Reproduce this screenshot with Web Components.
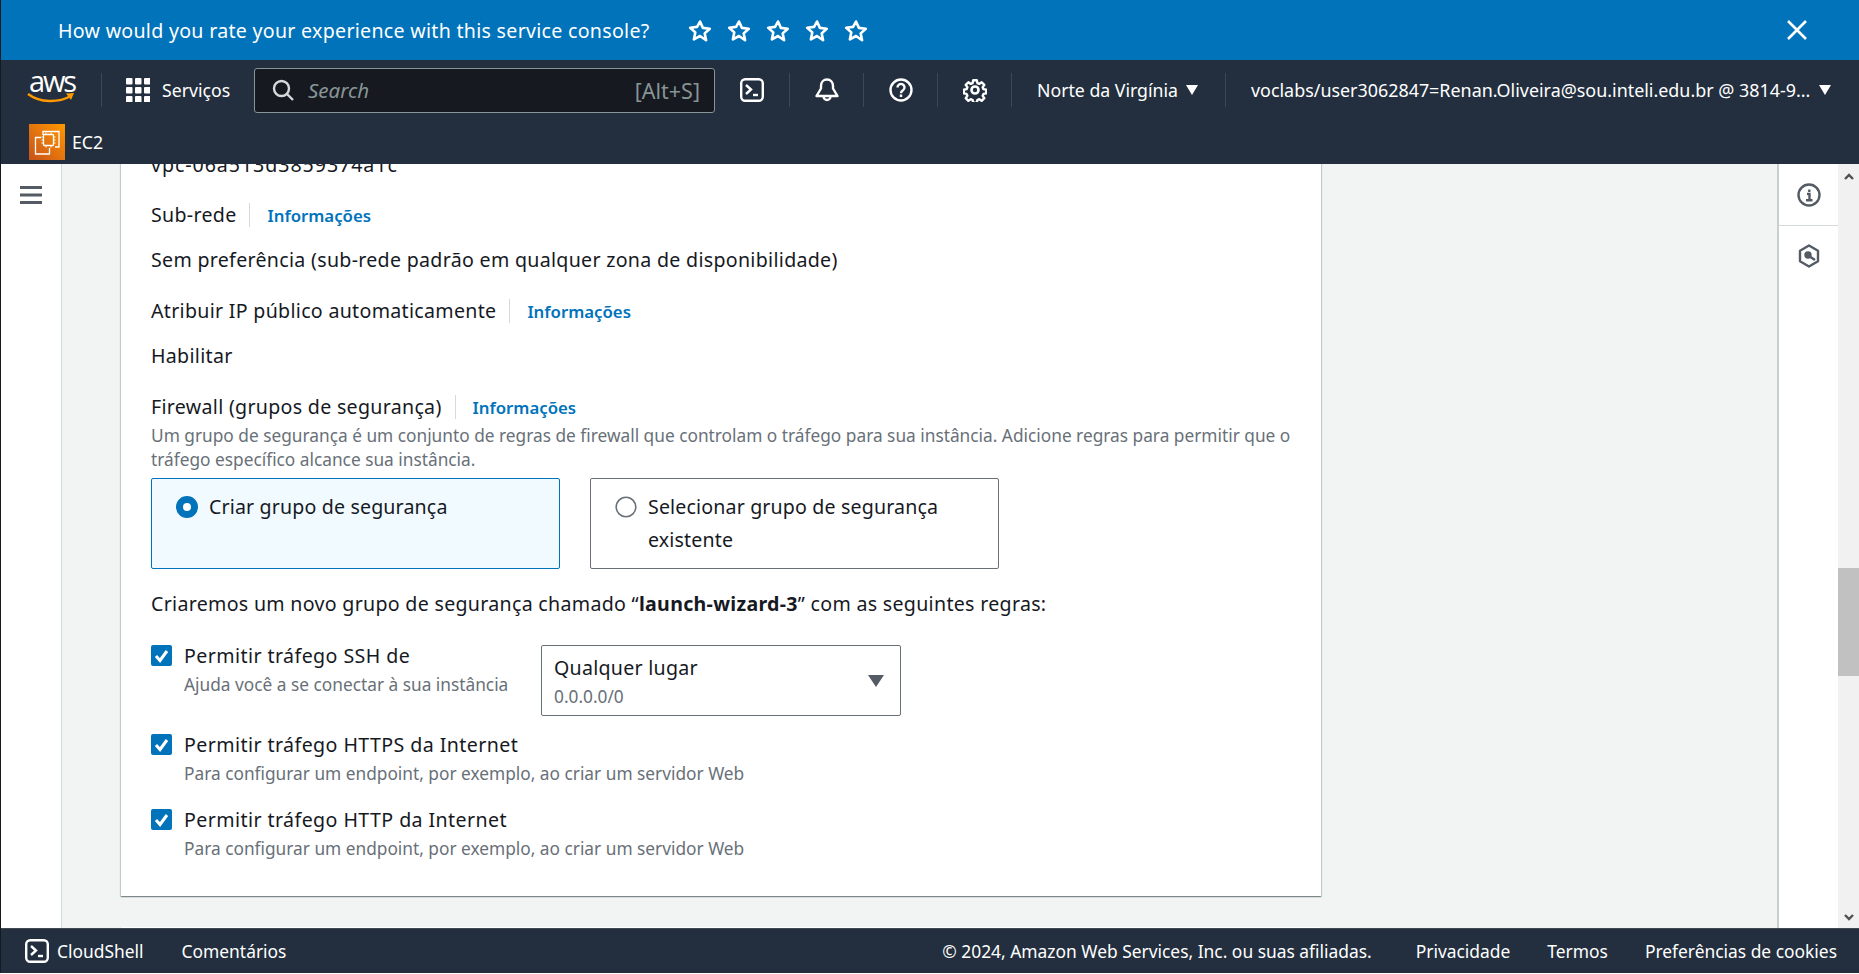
<!DOCTYPE html>
<html lang="pt-BR">
<head>
<meta charset="utf-8">
<title>EC2 - Executar instância</title>
<style>
  html, body { margin: 0; height: 100%; background: #fff; overflow: hidden; }
  body { font-family: "Noto Sans", "Open Sans", sans-serif; color: #16191f; }
  .vpc { letter-spacing: .95px; }
</style>
</head>
<body>
<aws-console>
  <survey-banner slot="banner">How would you rate your experience with this service console?</survey-banner>
  <top-nav slot="nav"></top-nav>
  <side-rail slot="rail"></side-rail>
  <div slot="main">
    <launch-card>
      <plain-row class="vpc" gap="26">vpc-06a513d3859374a1c</plain-row>
      <field-label gap="21">Sub-rede</field-label>
      <plain-row gap="27">Sem preferência (sub-rede padrão em qualquer zona de disponibilidade)</plain-row>
      <field-label gap="21">Atribuir IP público automaticamente</field-label>
      <plain-row gap="27">Habilitar</plain-row>
      <field-label>Firewall (grupos de segurança)</field-label>
      <help-text>Um grupo de segurança é um conjunto de regras de firewall que controlam o tráfego para sua instância. Adicione regras para permitir que o tráfego específico alcance sua instância.</help-text>
      <radio-pair>
        <radio-card selected>Criar grupo de segurança</radio-card>
        <radio-card>Selecionar grupo de segurança existente</radio-card>
      </radio-pair>
      <plain-row gap="23">Criaremos um novo grupo de segurança chamado “<b>launch-wizard-3</b>” com as seguintes regras:</plain-row>
      <check-row gap="29" hint="Ajuda você a se conectar à sua instância">Permitir tráfego SSH de
        <select-box slot="extra" value="Qualquer lugar" sub="0.0.0.0/0"></select-box>
      </check-row>
      <check-row gap="18" hint="Para configurar um endpoint, por exemplo, ao criar um servidor Web">Permitir tráfego HTTPS da Internet</check-row>
      <check-row gap="23" hint="Para configurar um endpoint, por exemplo, ao criar um servidor Web">Permitir tráfego HTTP da Internet</check-row>
    </launch-card>
    <launch-card empty></launch-card>
  </div>
  <tools-panel slot="tools"></tools-panel>
  <fake-scrollbar slot="scroll"></fake-scrollbar>
  <page-footer slot="footer"></page-footer>
</aws-console>

<script>
const TERMINAL = `<svg width="24" height="24" viewBox="0 0 24 24" fill="none" stroke="#fff" stroke-width="2.400"><rect x="1.200" y="1.200" width="21.600" height="21.600" rx="4"/><path d="M6 7l5 4.500-5 4.500"/><path d="M13 17h5"/></svg>`;

class aws_console extends HTMLElement {
  constructor() {
    super();
    this.attachShadow({ mode: "open" }).innerHTML = `
    <style>
      :host { display: grid; height: 973px; width: 1858px; margin-left: 1px; box-shadow: -1px 0 0 #16191f;
        grid-template-columns: 61px 1fr 61px 21px; grid-template-rows: 60px 104px 1fr 45px; overflow: hidden; }
      .wide { grid-column: 1 / -1; min-width: 0; }
      .main { background: #f2f3f3; overflow: hidden; min-height: 0; padding-left: 59px; }
    </style>
    <div class="wide"><slot name="banner"></slot></div>
    <div class="wide"><slot name="nav"></slot></div>
    <slot name="rail"></slot>
    <div class="main"><slot name="main"></slot></div>
    <slot name="tools"></slot>
    <slot name="scroll"></slot>
    <div class="wide"><slot name="footer"></slot></div>`;
  }
}

class survey_banner extends HTMLElement {
  connectedCallback() {
    var star = `<svg width="24" height="24" viewBox="0 0 24 24" fill="none" stroke="#fff" stroke-width="2.600" stroke-linejoin="round"><path d="M12 2.500l2.900 6.400 6.900.8-5.100 4.700 1.400 6.900L12 17l-6.100 3.300 1.400-6.900-5.100-4.700 6.900-.8z"/></svg>`;
    this.attachShadow({ mode: "open" }).innerHTML = `
    <style>
      :host { display: flex; align-items: center; height: 60px; background: #0073bb; color: #fff; padding-left: 57px; box-sizing: border-box; font-size: 19.600px; letter-spacing: .29px; }
      .stars { display: flex; gap: 15px; margin-left: 38px; margin-top: 2px; }
      .close { margin-left: auto; margin-right: 51px; display: flex; }
    </style>
    <span><slot></slot></span>
    <div class="stars">${star.repeat(5)}</div>
    <div class="close"><svg width="22" height="22" viewBox="0 0 22 22" stroke="#fff" stroke-width="2.600"><path d="M2 2l18 18M20 2L2 20"/></svg></div>`;
  }
}

class top_nav extends HTMLElement {
  connectedCallback() {
    var dots = "";
    for (var r = 0; r < 3; r++) for (var c = 0; c < 3; c++) dots += `<rect x="${c * 9}" y="${r * 9}" width="6.500" height="6.500" rx="1"/>`;
    var caret = `<svg width="12" height="10" viewBox="0 0 12 10" fill="#fff"><path d="M0 0h12L6 10z"/></svg>`;
    this.attachShadow({ mode: "open" }).innerHTML = `
    <style>
      :host { display: block; height: 104px; background: #232f3e; color: #fff; font-size: 17.700px; }
      .row1 { display: flex; align-items: center; height: 60px; white-space: nowrap; }
      .logo { width: 100px; padding-left: 26px; box-sizing: border-box; display: flex; flex-direction: column; height: 34px; }
      .logo span { font: 400 29px/20px "Open Sans", sans-serif; letter-spacing: -2.200px; display: block; margin: -2px 0 0 2px; }
      .cell { border-left: 1px solid #414750; height: 34px; display: flex; align-items: center; box-sizing: border-box; }
      .svc { padding-left: 24px; width: 153px; gap: 12px; }
      .search { width: 461px; height: 45px; background: #16191f; border: 1px solid #879596; border-radius: 3px; box-sizing: border-box; display: flex; align-items: center; padding: 0 14px 0 17px; color: #879596; font-size: 21.500px; }
      .search i { margin-left: 14px; font-size: 20.500px; }
      .search span { margin-left: auto; }
      .term { margin: 0 25px; display: flex; }
      .ico { padding: 0 24.500px; }
      .region { padding-left: 25px; width: 214px; gap: 8px; }
      .user { padding-left: 25px; gap: 9px; font-size: 17.900px; }
      .row2 { display: flex; align-items: center; gap: 7px; height: 44px; padding-left: 28px; }
      .tile { width: 36px; height: 36px; background: linear-gradient(to top right, #c8511b, #ff9900); display: flex; }
    </style>
    <div class="row1">
      <div class="logo"><span>aws</span>
        <svg width="48" height="12" viewBox="0 0 48 12" fill="none" style="margin-top:1px"><path d="M1 2c12 9 30 9 43 2" stroke="#ff9900" stroke-width="2.400"/><path d="M39 1.500l8-.5-3 7" fill="#ff9900"/></svg>
      </div>
      <div class="cell svc"><svg width="24" height="24" viewBox="0 0 24 24" fill="#fff">${dots}</svg><span>Serviços</span></div>
      <div class="search">
        <svg width="22" height="22" viewBox="0 0 22 22" fill="none" stroke="#d5dbdb" stroke-width="2.400"><circle cx="9.500" cy="9.500" r="7.500"/><path d="M15 15l6 6"/></svg>
        <i>Search</i><span>[Alt+S]</span>
      </div>
      <div class="term">${TERMINAL}</div>
      <div class="cell ico"><svg width="24" height="24" viewBox="0 0 24 24" fill="none" stroke="#fff" stroke-width="2.400" stroke-linejoin="round"><path d="M12 1.500c-3.500 0-6 2.500-6 6.500v2.500L1.500 18h21L18 10.500V8c0-4-2.500-6.500-6-6.500z"/><path d="M8.500 18.500a3.500 3.500 0 0 0 7 0"/></svg></div>
      <div class="cell ico"><svg width="24" height="24" viewBox="0 0 24 24" fill="none" stroke="#fff" stroke-width="2.400"><circle cx="12" cy="12" r="10.500"/><path d="M8.500 9.500a3.500 3.500 0 1 1 5.500 2.800c-1.300.8-2 1.400-2 2.900"/><path d="M12 16.500v2.500"/></svg></div>
      <div class="cell ico"><svg width="24" height="24" viewBox="0 0 24 24" fill="none" stroke="#fff" stroke-width="2.600" stroke-linejoin="round"><circle cx="12" cy="12" r="3.500"/><path d="M10 1.500h4l.6 3.100 2.100.9 2.600-1.800 2.900 2.900-1.800 2.600.9 2.100 3 .6v4l-3 .6-.9 2.100 1.800 2.600-2.900 2.900-2.600-1.800-2.100.9-.6 3h-4l-.6-3-2.100-.9-2.600 1.800-2.900-2.900 1.800-2.600-.9-2.100-3-.6v-4l3-.6.9-2.100-1.800-2.600 2.900-2.900 2.600 1.800 2.100-.9z" transform="translate(1.100 .9) scale(.91)"/></svg></div>
      <div class="cell region"><span>Norte da Virgínia</span>${caret}</div>
      <div class="cell user"><span>voclabs/user3062847=Renan.Oliveira@sou.inteli.edu.br @ 3814-9...</span>${caret}</div>
    </div>
    <div class="row2">
      <div class="tile"><svg width="36" height="36" viewBox="0 0 36 36" fill="none" stroke="#fff" stroke-width="1.300"><path d="M14 11V7.500h16V23h-4"/><path d="M12 13.500H6.500V30h14v-6"/><rect x="14.500" y="10.500" width="10" height="11" rx="1"/><path d="M12.500 13h2M12.500 16h2M12.500 19h2M24.500 13h2M24.500 16h2M24.500 19h2M17 8.500v2M22 8.500v2M17 21.500v2M22 21.500v2" stroke-width="1"/></svg></div>
      <span>EC2</span>
    </div>`;
  }
}

class side_rail extends HTMLElement {
  connectedCallback() {
    this.attachShadow({ mode: "open" }).innerHTML = `
    <style>
      :host { display: block; background: #fff; border-right: 1px solid #d5dbdb; padding: 22px 0 0 19px; box-sizing: border-box; }
      svg { display: block; }
    </style>
    <svg width="22" height="18" viewBox="0 0 22 18" fill="#545b64"><rect width="22" height="3"/><rect y="7.500" width="22" height="3"/><rect y="15" width="22" height="3"/></svg>`;
  }
}

class launch_card extends HTMLElement {
  connectedCallback() {
    this.attachShadow({ mode: "open" }).innerHTML = `
    <style>
      :host { display: block; width: 1200px; background: #fff; box-sizing: border-box; padding: 0 30px 35px; box-shadow: 0 1px 1px 0 rgba(0,28,36,.3), 1px 1px 1px 0 rgba(0,28,36,.15), -1px 1px 1px 0 rgba(0,28,36,.15); font-size: 19.600px; letter-spacing: .3px; line-height: 24px; }
      :host(:first-child) { margin-top: -11px; }
      :host([empty]) { margin-top: 31px; height: 40px; }
    </style>
    <slot></slot>`;
  }
}

class plain_row extends HTMLElement {
  connectedCallback() {
    this.attachShadow({ mode: "open" }).innerHTML = `
    <style>
      :host { display: block; white-space: nowrap; height: 24px; margin-bottom: ${this.getAttribute("gap") || 0}px; }
    </style>
    <slot></slot>`;
  }
}

class field_label extends HTMLElement {
  connectedCallback() {
    this.attachShadow({ mode: "open" }).innerHTML = `
    <style>
      :host { display: flex; height: 24px; align-items: center; margin-bottom: ${this.getAttribute("gap") || 0}px; }
      .sep { width: 1px; height: 24px; background: #d5dbdb; margin: 0 17px 0 13px; }
      a { color: #0073bb; font-size: 16.800px; font-weight: 600; letter-spacing: 0; text-decoration: none; margin-top: 2px; }
    </style>
    <span><slot></slot></span><span class="sep"></span><a href="#">Informações</a>`;
  }
}

class help_text extends HTMLElement {
  connectedCallback() {
    this.attachShadow({ mode: "open" }).innerHTML = `
    <style>
      :host { display: block; color: #687078; font-size: 17.300px; letter-spacing: 0; line-height: 24px; margin-top: 5px; margin-bottom: 6px; width: 1145px; }
    </style>
    <slot></slot>`;
  }
}

class radio_pair extends HTMLElement {
  connectedCallback() {
    this.attachShadow({ mode: "open" }).innerHTML = `
    <style>
      :host { display: flex; gap: 30px; margin-bottom: 23px; }
    </style>
    <slot></slot>`;
  }
}

class radio_card extends HTMLElement {
  connectedCallback() {
    var on = this.hasAttribute("selected");
    this.attachShadow({ mode: "open" }).innerHTML = `
    <style>
      :host { display: flex; gap: 11px; width: 409px; height: 91px; box-sizing: border-box; border: 1px solid ${on ? "#0073bb" : "#687078"}; border-radius: 2px; background: ${on ? "#f1faff" : "#fff"}; padding: 11px 24px; line-height: 33px; letter-spacing: .15px; }
      svg { flex: none; margin-top: 6px; }
      span { display: block; }
    </style>
    <svg width="22" height="22" viewBox="0 0 22 22">${on
      ? `<circle cx="11" cy="11" r="7.500" fill="#fff" stroke="#0073bb" stroke-width="7"/>`
      : `<circle cx="11" cy="11" r="9.800" fill="#fff" stroke="#687078" stroke-width="1.600"/>`}</svg>
    <span><slot></slot></span>`;
  }
}

class check_row extends HTMLElement {
  connectedCallback() {
    this.attachShadow({ mode: "open" }).innerHTML = `
    <style>
      :host { display: flex; margin-top: ${this.getAttribute("gap") || 0}px; min-height: 52px; letter-spacing: .42px; }
      .box { flex: none; width: 21px; height: 21px; background: #0073bb; border-radius: 2px; margin-right: 12px; }
      .txt { width: 357px; white-space: nowrap; margin-top: -1px; }
      small { display: block; color: #687078; font-size: 17.300px; letter-spacing: 0; margin-top: 5px; }
    </style>
    <svg class="box" viewBox="0 0 21 21" fill="none" stroke="#fff" stroke-width="3"><path d="M5 11l4 4.500L16 6"/></svg>
    <div class="txt"><slot></slot><small>${this.getAttribute("hint")}</small></div>
    <slot name="extra"></slot>`;
  }
}

class select_box extends HTMLElement {
  connectedCallback() {
    this.attachShadow({ mode: "open" }).innerHTML = `
    <style>
      :host { display: flex; align-items: center; width: 360px; height: 71px; box-sizing: border-box; border: 1px solid #687078; border-radius: 2px; padding: 4px 16px 0 12px; letter-spacing: .27px; }
      small { display: block; color: #687078; font-size: 17.300px; letter-spacing: 0; margin-top: 5px; }
      svg { margin-left: auto; margin-top: -4px; }
    </style>
    <div>${this.getAttribute("value")}<small>${this.getAttribute("sub")}</small></div>
    <svg width="16" height="12" viewBox="0 0 16 12" fill="#545b64"><path d="M0 0h16L8 12z"/></svg>`;
  }
}

class tools_panel extends HTMLElement {
  connectedCallback() {
    this.attachShadow({ mode: "open" }).innerHTML = `
    <style>
      :host { display: block; background: #fff; border-left: 2px solid #c9cfcf; box-sizing: border-box; }
      div { height: 61px; border-bottom: 1px solid #d5dbdb; display: flex; justify-content: center; align-items: center; }
      div + div { border: 0; height: 60px; }
      svg { display: block; }
    </style>
    <div><svg width="24" height="24" viewBox="0 0 24 24" fill="none" stroke="#545b64" stroke-width="2.400"><circle cx="12" cy="12" r="10.500"/><path d="M10 11h2.500v6M9 17.300h6.500"/><path d="M12.300 6.500v2.500"/></svg></div>
    <div><svg width="24" height="24" viewBox="0 0 24 24" fill="none" stroke="#545b64" stroke-width="2.400" stroke-linejoin="round"><path d="M12 1.500l9 5.200v10.600l-9 5.200-9-5.200V6.700z"/><circle cx="11" cy="11" r="2.500" fill="#545b64"/><path d="M12 12l6 4"/></svg></div>`;
  }
}

class fake_scrollbar extends HTMLElement {
  connectedCallback() {
    this.attachShadow({ mode: "open" }).innerHTML = `
    <style>
      :host { display: flex; flex-direction: column; align-items: stretch; background: #f1f1f1; }
      svg { align-self: center; flex: none; }
      .thumb { background: #c1c1c1; height: 108px; margin-top: 387px; }
      .down { margin-top: auto; margin-bottom: 6px; }
      .up { margin-top: 8px; }
    </style>
    <svg class="up" width="10" height="9" viewBox="0 0 10 9" fill="none" stroke="#505050" stroke-width="2.400"><path d="M1 7l4-4 4 4"/></svg>
    <div class="thumb"></div>
    <svg class="down" width="10" height="9" viewBox="0 0 10 9" fill="none" stroke="#505050" stroke-width="2.400"><path d="M1 2l4 4 4-4"/></svg>`;
  }
}

class page_footer extends HTMLElement {
  connectedCallback() {
    this.attachShadow({ mode: "open" }).innerHTML = `
    <style>
      :host { display: flex; align-items: center; height: 45px; background: #232f3e; color: #fff; font-size: 17.400px; padding: 0 22px 0 24px; white-space: nowrap; border-top: 1px solid #414750; box-sizing: border-box; }
      svg { margin-right: 8px; }
      .c { margin-left: 38px; }
      .r { margin-left: auto; }
      .l { margin-left: 44px; }
      .t { margin-left: 37px; }
    </style>
    ${TERMINAL}<span>CloudShell</span><span class="c">Comentários</span>
    <span class="r">© 2024, Amazon Web Services, Inc. ou suas afiliadas.</span>
    <span class="l">Privacidade</span><span class="t">Termos</span><span class="t">Preferências de cookies</span>`;
  }
}

window.customElements.define("aws-console", aws_console);
window.customElements.define("survey-banner", survey_banner);
window.customElements.define("top-nav", top_nav);
window.customElements.define("side-rail", side_rail);
window.customElements.define("launch-card", launch_card);
window.customElements.define("plain-row", plain_row);
window.customElements.define("field-label", field_label);
window.customElements.define("help-text", help_text);
window.customElements.define("radio-pair", radio_pair);
window.customElements.define("radio-card", radio_card);
window.customElements.define("check-row", check_row);
window.customElements.define("select-box", select_box);
window.customElements.define("tools-panel", tools_panel);
window.customElements.define("fake-scrollbar", fake_scrollbar);
window.customElements.define("page-footer", page_footer);
</script>
</body>
</html>
